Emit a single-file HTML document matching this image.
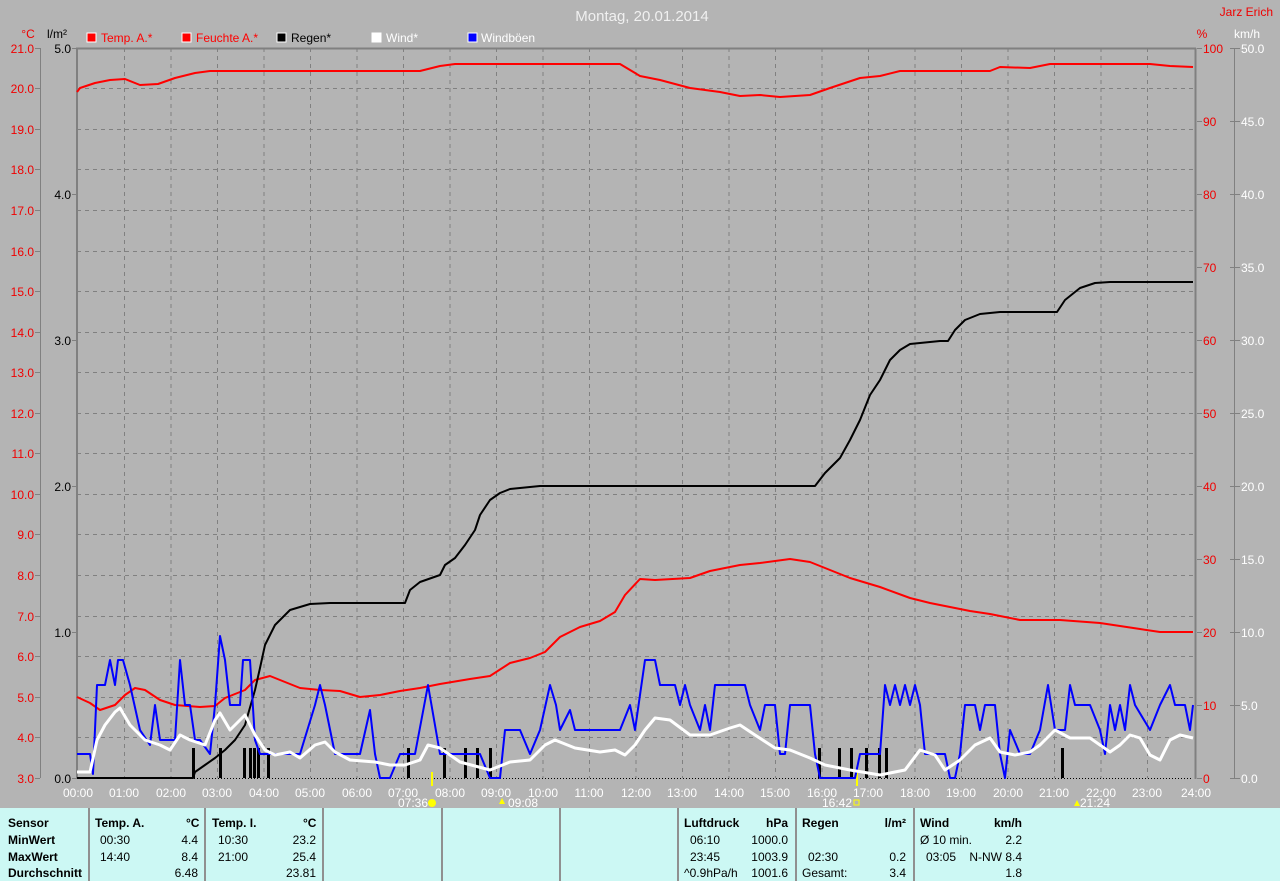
<!DOCTYPE html>
<html><head><meta charset="utf-8"><style>
body{margin:0;width:1280px;height:881px;background:#b4b4b4;overflow:hidden;font-family:"Liberation Sans",sans-serif;position:relative}
svg{position:absolute;left:0;top:0}
.panel{position:absolute;left:0;top:808px;width:1280px;height:73px;background:#ccf8f4;font-size:12px;color:#000}
.d{position:absolute;top:0;width:2px;height:73px;background:#909090}
.t{position:absolute;white-space:nowrap}
.b{font-weight:bold}
</style></head><body>
<svg width="1280" height="808" font-family="Liberation Sans, sans-serif">
<text x="642" y="21" fill="#f0f0f0" font-size="15" text-anchor="middle">Montag, 20.01.2014</text>
<text x="1273" y="16" fill="#f00000" font-size="12" text-anchor="end">Jarz Erich</text>
<text x="28" y="38" fill="#f00000" font-size="12" text-anchor="middle">°C</text>
<text x="57" y="38" fill="#000" font-size="12" text-anchor="middle">l/m²</text>
<text x="1202" y="38" fill="#f00000" font-size="12" text-anchor="middle">%</text>
<text x="1247" y="38" fill="#fff" font-size="12" text-anchor="middle">km/h</text>
<g font-size="12">
<rect x="87" y="33" width="9" height="9" fill="#f00" stroke="#fff"/><text x="101" y="42" fill="#f00">Temp. A.*</text>
<rect x="182" y="33" width="9" height="9" fill="#f00" stroke="#fff"/><text x="196" y="42" fill="#f00">Feuchte A.*</text>
<rect x="277" y="33" width="9" height="9" fill="#000" stroke="#fff"/><text x="291" y="42" fill="#000">Regen*</text>
<rect x="372" y="33" width="9" height="9" fill="#fff" stroke="#fff"/><text x="386" y="42" fill="#fff">Wind*</text>
<rect x="468" y="33" width="9" height="9" fill="#00f" stroke="#fff"/><text x="481" y="42" fill="#fff">Windböen</text>
</g>
<!-- grid -->
<g stroke="#808080" stroke-dasharray="4,4" stroke-width="1">
<path d="M124.5 48V778M171 48V778M217.5 48V778M264 48V778M310.5 48V778M357 48V778M403.5 48V778M450 48V778M496.5 48V778M543 48V778M589.5 48V778M636 48V778M682.5 48V778M729 48V778M775.5 48V778M822 48V778M868.5 48V778M915 48V778M961.5 48V778M1008 48V778M1054.5 48V778M1101 48V778M1147.5 48V778"/>
<path d="M77 88.5H1193M77 129.5H1193M77 169.5H1193M77 210.5H1193M77 251.5H1193M77 291.5H1193M77 332.5H1193M77 372.5H1193M77 413.5H1193M77 453.5H1193M77 494.5H1193M77 534.5H1193M77 575.5H1193M77 616.5H1193M77 656.5H1193M77 697.5H1193M77 737.5H1193"/>
</g>
<path d="M77 778.5H1193" stroke="#000" stroke-dasharray="1,2"/>
<path d="M76 48.5H1196M77 48V779M1195.5 48V779" stroke="#808080" stroke-width="2" fill="none"/>
<!-- axes -->
<g stroke="#808080"><path d="M40.5 48V778M35 48.5H40M35 88.5H40M35 129.5H40M35 169.5H40M35 210.5H40M35 251.5H40M35 291.5H40M35 332.5H40M35 372.5H40M35 413.5H40M35 453.5H40M35 494.5H40M35 534.5H40M35 575.5H40M35 616.5H40M35 656.5H40M35 697.5H40M35 737.5H40M35 778.5H40"/>
<path d="M72 48.5H77M72 194.5H77M72 340.5H77M72 486.5H77M72 632.5H77M72 778.5H77"/>
<path d="M1197 48.5H1202M1197 121.5H1202M1197 194.5H1202M1197 267.5H1202M1197 340.5H1202M1197 413.5H1202M1197 486.5H1202M1197 559.5H1202M1197 632.5H1202M1197 705.5H1202M1197 778.5H1202"/>
<path d="M1234.5 48V778M1230 48.5H1240M1230 121.5H1240M1230 194.5H1240M1230 267.5H1240M1230 340.5H1240M1230 413.5H1240M1230 486.5H1240M1230 559.5H1240M1230 632.5H1240M1230 705.5H1240M1230 778.5H1240"/></g>
<g font-size="12" fill="#f00000" text-anchor="end">
<text x="34" y="53">21.0</text><text x="34" y="93">20.0</text><text x="34" y="134">19.0</text><text x="34" y="174">18.0</text><text x="34" y="215">17.0</text><text x="34" y="256">16.0</text><text x="34" y="296">15.0</text><text x="34" y="337">14.0</text><text x="34" y="377">13.0</text><text x="34" y="418">12.0</text><text x="34" y="458">11.0</text><text x="34" y="499">10.0</text><text x="34" y="539">9.0</text><text x="34" y="580">8.0</text><text x="34" y="621">7.0</text><text x="34" y="661">6.0</text><text x="34" y="702">5.0</text><text x="34" y="742">4.0</text><text x="34" y="783">3.0</text>
</g>
<g font-size="12" fill="#000" text-anchor="end"><text x="71" y="53">5.0</text><text x="71" y="199">4.0</text><text x="71" y="345">3.0</text><text x="71" y="491">2.0</text><text x="71" y="637">1.0</text><text x="71" y="783">0.0</text></g>
<g font-size="12" fill="#f00000"><text x="1203" y="53">100</text><text x="1203" y="126">90</text><text x="1203" y="199">80</text><text x="1203" y="272">70</text><text x="1203" y="345">60</text><text x="1203" y="418">50</text><text x="1203" y="491">40</text><text x="1203" y="564">30</text><text x="1203" y="637">20</text><text x="1203" y="710">10</text><text x="1203" y="783">0</text></g>
<g font-size="12" fill="#fff"><text x="1241" y="53">50.0</text><text x="1241" y="126">45.0</text><text x="1241" y="199">40.0</text><text x="1241" y="272">35.0</text><text x="1241" y="345">30.0</text><text x="1241" y="418">25.0</text><text x="1241" y="491">20.0</text><text x="1241" y="564">15.0</text><text x="1241" y="637">10.0</text><text x="1241" y="710">5.0</text><text x="1241" y="783">0.0</text></g>
<g font-size="12" fill="#fff" text-anchor="middle">
<text x="78" y="797">00:00</text><text x="124" y="797">01:00</text><text x="171" y="797">02:00</text><text x="217" y="797">03:00</text><text x="264" y="797">04:00</text><text x="310" y="797">05:00</text><text x="357" y="797">06:00</text><text x="403" y="797">07:00</text><text x="450" y="797">08:00</text><text x="496" y="797">09:00</text><text x="543" y="797">10:00</text><text x="589" y="797">11:00</text><text x="636" y="797">12:00</text><text x="682" y="797">13:00</text><text x="729" y="797">14:00</text><text x="775" y="797">15:00</text><text x="822" y="797">16:00</text><text x="868" y="797">17:00</text><text x="915" y="797">18:00</text><text x="961" y="797">19:00</text><text x="1008" y="797">20:00</text><text x="1054" y="797">21:00</text><text x="1101" y="797">22:00</text><text x="1147" y="797">23:00</text><text x="1196" y="797">24:00</text>
<text x="413" y="807">07:36</text><text x="523" y="807">09:08</text><text x="837" y="807">16:42</text><text x="1095" y="807">21:24</text>
</g>
<path d="M432 772V786M857 772V786" stroke="#ff0" stroke-width="2"/>
<circle cx="432" cy="803" r="4" fill="#ff0"/>
<path d="M502 798l-3 6h6z" fill="#ff0"/><path d="M1077 800l-3 6h6z" fill="#ff0"/>
<rect x="854" y="800" width="5" height="5" fill="none" stroke="#ff0"/>
<!-- rain bars -->
<path d="M193.5 778V748M220.5 778V748M244.5 778V748M250.5 778V748M254.5 778V748M258.5 778V748M268.5 778V748M408.5 778V748M444.5 778V748M465.5 778V748M477.5 778V748M490.5 778V748M819.5 778V748M839.5 778V748M851.5 778V748M866.5 778V748M879.5 778V748M886.5 778V748M1062.5 778V748" stroke="#000" stroke-width="3"/>
<g fill="none" stroke-linejoin="round">
<polyline stroke="#f00" stroke-width="2" points="77,92 80,88 95,83 110,80 125,79 140,85 158,84 175,78 195,73 210,71 420,71 440,66 455,64 620,64 640,76 660,80 690,88 720,92 740,96 760,95 780,97 810,95 830,88 860,78 880,76 900,71 990,71 1000,67 1030,68 1050,64 1150,64 1170,66 1193,67"/>
<polyline stroke="#f00" stroke-width="2" points="77,697 90,703 100,710 115,705 125,695 135,688 145,690 160,700 175,705 200,707 215,706 225,698 245,690 255,680 270,676 285,682 300,688 320,690 340,691 360,697 380,695 400,691 420,688 440,684 470,679 490,676 510,663 530,658 545,652 560,637 580,627 600,621 615,612 625,595 640,579 655,580 690,578 710,571 740,565 760,563 790,559 810,562 830,570 850,578 880,587 910,598 930,603 950,607 970,611 990,614 1020,620 1060,620 1100,623 1140,629 1160,632 1193,632"/>
<polyline stroke="#000" stroke-width="2" points="77,778 193,778 195,772 205,765 215,758 225,750 235,740 245,725 255,690 260,668 265,645 275,625 290,610 310,604 330,603 405,603 410,590 420,582 440,575 445,565 455,558 465,545 475,530 480,515 490,500 500,493 510,489 530,487 540,486 815,486 825,473 840,458 850,440 860,420 870,395 880,380 890,360 900,350 910,344 940,341 948,341 955,330 965,320 980,314 1000,312 1057,312 1065,300 1080,288 1095,283 1110,282 1193,282"/>
<polyline stroke="#0000ff" stroke-width="2" points="77,754 90,754 93,774 97,685 105,685 110,660 115,685 118,660 123,660 130,685 140,730 150,745 155,705 160,740 175,740 180,660 185,705 190,705 195,740 200,740 210,754 215,705 220,636 225,660 230,705 240,705 243,660 250,660 255,740 260,754 300,754 315,705 320,685 325,705 335,754 360,754 370,710 375,754 380,778 390,778 400,754 415,754 428,685 440,754 480,754 490,778 500,778 505,730 520,730 530,754 540,730 550,685 556,705 560,730 570,710 575,730 620,730 630,705 635,730 645,660 655,660 660,685 675,685 680,705 685,685 690,705 700,730 705,705 710,730 715,685 745,685 750,705 760,730 765,705 775,705 780,754 785,754 790,705 810,705 815,754 820,778 855,778 860,754 880,754 885,685 890,705 895,685 900,705 905,685 910,705 915,685 920,705 925,754 945,754 950,778 955,778 960,754 965,705 975,705 980,730 985,705 995,705 1000,754 1005,778 1010,730 1020,754 1030,754 1040,730 1048,685 1055,730 1065,730 1070,685 1075,705 1090,705 1100,730 1105,754 1110,705 1115,730 1120,705 1125,730 1130,685 1135,705 1150,730 1160,705 1170,685 1175,705 1185,705 1190,730 1193,705"/>
<polyline stroke="#fff" stroke-width="3" points="77,772 90,772 97,740 105,725 115,712 120,708 130,725 145,740 160,745 170,750 180,735 190,740 205,745 215,720 220,713 230,730 245,715 255,735 265,750 275,755 290,752 300,758 315,745 325,742 335,752 350,760 375,762 390,765 405,765 420,760 428,745 440,748 460,762 490,770 510,762 530,760 545,745 555,740 575,748 600,752 615,750 625,755 635,745 645,730 655,718 670,720 690,735 710,735 730,728 740,725 755,735 775,748 790,750 810,758 825,765 850,770 880,775 905,770 920,750 935,755 945,770 960,760 975,745 990,738 1000,752 1015,755 1030,752 1040,745 1055,730 1070,738 1090,738 1100,745 1110,752 1120,745 1130,735 1140,738 1150,755 1160,760 1170,740 1180,735 1193,738"/>
</g>
</svg>
<div class="panel">
<div class="d" style="left:88px"></div><div class="d" style="left:204px"></div><div class="d" style="left:322px"></div><div class="d" style="left:441px"></div><div class="d" style="left:559px"></div><div class="d" style="left:677px"></div><div class="d" style="left:795px"></div><div class="d" style="left:913px"></div>
<div class="t b" style="left:8px;top:8px">Sensor</div><div class="t b" style="left:8px;top:25px">MinWert</div><div class="t b" style="left:8px;top:42px">MaxWert</div><div class="t b" style="left:8px;top:58px">Durchschnitt</div>
<div class="t b" style="left:95px;top:8px">Temp. A.</div><div class="t b" style="left:186px;top:8px">°C</div>
<div class="t" style="left:100px;top:25px">00:30</div><div class="t" style="right:1082px;top:25px">4.4</div>
<div class="t" style="left:100px;top:42px">14:40</div><div class="t" style="right:1082px;top:42px">8.4</div>
<div class="t" style="right:1082px;top:58px">6.48</div>
<div class="t b" style="left:212px;top:8px">Temp. I.</div><div class="t b" style="left:303px;top:8px">°C</div>
<div class="t" style="left:218px;top:25px">10:30</div><div class="t" style="right:964px;top:25px">23.2</div>
<div class="t" style="left:218px;top:42px">21:00</div><div class="t" style="right:964px;top:42px">25.4</div>
<div class="t" style="right:964px;top:58px">23.81</div>
<div class="t b" style="left:684px;top:8px">Luftdruck</div><div class="t b" style="right:492px;top:8px">hPa</div>
<div class="t" style="left:690px;top:25px">06:10</div><div class="t" style="right:492px;top:25px">1000.0</div>
<div class="t" style="left:690px;top:42px">23:45</div><div class="t" style="right:492px;top:42px">1003.9</div>
<div class="t" style="left:684px;top:58px">^0.9hPa/h</div><div class="t" style="right:492px;top:58px">1001.6</div>
<div class="t b" style="left:802px;top:8px">Regen</div><div class="t b" style="right:374px;top:8px">l/m²</div>
<div class="t" style="left:808px;top:42px">02:30</div><div class="t" style="right:374px;top:42px">0.2</div>
<div class="t" style="left:802px;top:58px">Gesamt:</div><div class="t" style="right:374px;top:58px">3.4</div>
<div class="t b" style="left:920px;top:8px">Wind</div><div class="t b" style="right:258px;top:8px">km/h</div>
<div class="t" style="left:920px;top:25px">Ø 10 min.</div><div class="t" style="right:258px;top:25px">2.2</div>
<div class="t" style="left:926px;top:42px">03:05</div><div class="t" style="right:258px;top:42px">N-NW 8.4</div>
<div class="t" style="right:258px;top:58px">1.8</div>
</div>
</body></html>
